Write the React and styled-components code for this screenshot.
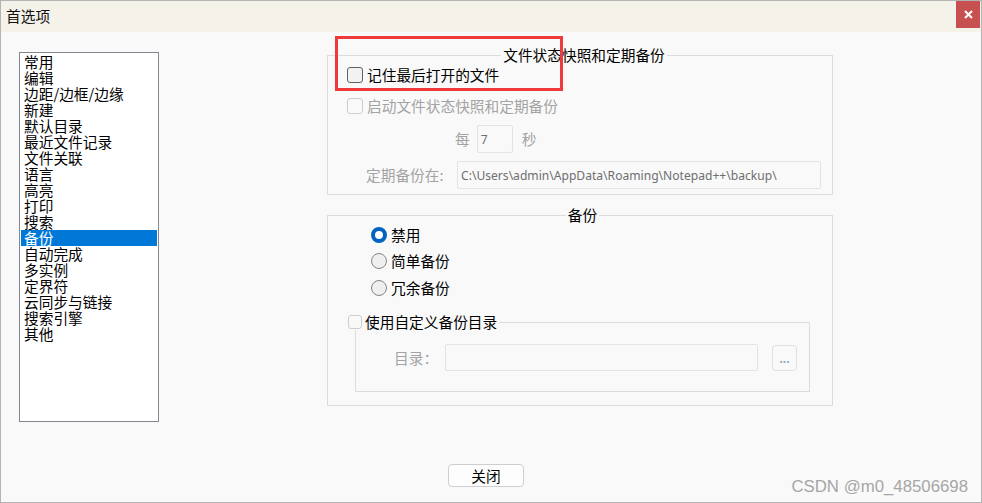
import React from 'react';
import styled, { createGlobalStyle } from 'styled-components';

const CJK = `"Noto Sans CJK SC", "Noto Sans", sans-serif`;

const Global = createGlobalStyle`
  html, body { margin: 0; padding: 0; background: #ffffff; }
  body { font-family: ${CJK}; }
  * { box-sizing: border-box; }
`;

const Window = styled.div`
  position: relative;
  width: 982px;
  height: 503px;
  border: 1px solid #b4b4b4;
  background: #f9f9f9;
  display: flex;
  flex-direction: column;
  overflow: hidden;
`;

const TitleBar = styled.div`
  height: 31px;
  flex: none;
  background: #f5f2ea;
  display: flex;
  align-items: flex-start;
  justify-content: space-between;
  padding-left: 5px;
`;

const TitleText = styled.div`
  font-size: 14.7px;
  line-height: 16px;
  margin-top: 7px;
  color: #111;
`;

const CloseBtn = styled.div`
  width: 24px;
  height: 27px;
  margin-right: 1px;
  background: #c75050;
  display: flex;
  align-items: center;
  justify-content: center;
`;

const Body = styled.div`
  flex: 1;
  display: flex;
  flex-direction: column;
  padding: 15px 0 0 18px;
`;

const MainRow = styled.div`
  display: flex;
  align-items: flex-start;
  height: 375px;
`;

const ListBox = styled.div`
  width: 140px;
  height: 370px;
  margin-top: 5px;
  border: 1px solid #828790;
  background: #ffffff;
  padding: 1px;
`;

const ListItem = styled.div`
  height: 16px;
  line-height: 16px;
  font-size: 14.7px;
  padding-left: 3px;
  white-space: nowrap;
  color: ${(p) => (p.$selected ? '#ffffff' : '#000000')};
  background: ${(p) => (p.$selected ? '#0078d7' : 'transparent')};
`;

const Panel = styled.div`
  margin-left: 168px;
  width: 506px;
  display: flex;
  flex-direction: column;
`;

const Group = styled.fieldset`
  margin: ${(p) => p.$mt || 0}px 0 0 0;
  min-inline-size: 0;
  border: 1px solid #dcdcdc;
  padding: ${(p) => p.$pad};
  display: flex;
  flex-direction: column;
`;

const Legend = styled.legend`
  margin: 0 auto;
  padding: 0 2px;
  font-size: 14.7px;
  line-height: 16px;
  color: #000;
`;

const CheckLegend = styled.legend`
  margin-left: -8px;
  padding: 0 2px 0 0;
  display: flex;
  align-items: center;
  gap: 3px;
  font-size: 14.7px;
  line-height: 16px;
  height: 16px;
  color: #000;
`;

const Box = styled.span`
  flex: none;
  width: ${(p) => p.$size || 16}px;
  height: ${(p) => p.$size || 16}px;
  border-radius: 3px;
  border: 1px solid ${(p) => (p.$disabled ? '#cdcdcd' : '#616161')};
  background: ${(p) => (p.$disabled ? '#f9f9f9' : '#f2f2f2')};
`;

const OptionRow = styled.div`
  display: flex;
  align-items: center;
  gap: 4px;
  height: 16px;
  margin-top: ${(p) => p.$mt || 0}px;
  margin-left: ${(p) => p.$ml || 0}px;
  font-size: 14.7px;
  line-height: 16px;
  white-space: nowrap;
  color: ${(p) => (p.$disabled ? '#a3a3a3' : '#000000')};
`;

const Radio = styled.span`
  flex: none;
  width: 16px;
  height: 16px;
  border-radius: 50%;
  border: ${(p) => (p.$checked ? '4.5px solid #0063c1' : '1px solid #858585')};
  background: ${(p) => (p.$checked ? '#ffffff' : '#efefef')};
`;

const FieldRow = styled.div`
  display: flex;
  align-items: center;
  height: ${(p) => p.$h || 28}px;
  margin-top: ${(p) => p.$mt || 0}px;
  padding-left: ${(p) => p.$pl || 0}px;
`;

const Label = styled.span`
  flex: none;
  width: ${(p) => (p.$w ? `${p.$w}px` : 'auto')};
  margin-right: ${(p) => p.$mr || 0}px;
  font-size: 14.7px;
  line-height: 16px;
  color: #a3a3a3;
  white-space: nowrap;
`;

const TextInput = styled.div`
  flex: ${(p) => (p.$w ? 'none' : '1')};
  width: ${(p) => (p.$w ? `${p.$w}px` : 'auto')};
  height: ${(p) => p.$h || 28}px;
  border: 1px solid #e4e4e4;
  border-radius: 2px;
  background: #f9f9f9;
  display: flex;
  align-items: center;
  padding-left: 3px;
  margin-right: ${(p) => p.$mr || 0}px;
  font-family: "Noto Sans", "Open Sans", sans-serif;
  font-size: 12.1px;
  color: #6e6e6e;
  white-space: nowrap;
  overflow: hidden;
`;

const DotsButton = styled.div`
  flex: none;
  width: 25px;
  height: 26px;
  border: 1px solid #e0e0e0;
  border-radius: 4px;
  background: #f9f9f9;
  display: flex;
  align-items: center;
  justify-content: center;
  font-family: "Liberation Sans", sans-serif;
  font-size: 12px;
  font-weight: bold;
  color: #8fa3bf;
  padding-top: 2px;
`;

const Footer = styled.div`
  margin-top: 42px;
  padding-left: 429px;
  display: flex;
`;

const Button = styled.div`
  width: 76px;
  height: 23px;
  border: 1px solid #cfcfcf;
  border-radius: 4px;
  background: #fdfdfd;
  display: flex;
  align-items: center;
  justify-content: center;
  font-size: 14.7px;
  line-height: 16px;
  color: #000;
`;

const Watermark = styled.div`
  position: absolute;
  right: 13px;
  bottom: 5px;
  font-family: "Liberation Sans", Arial, sans-serif;
  font-size: 16.8px;
  color: #a6a6a6;
`;

const Annotation = styled.div`
  position: absolute;
  left: 334px;
  top: 35px;
  width: 228px;
  height: 55px;
  border: 3px solid #f0393a;
  pointer-events: none;
`;

const items = [
  '常用', '编辑', '边距/边框/边缘', '新建', '默认目录', '最近文件记录', '文件关联',
  '语言', '高亮', '打印', '搜索', '备份', '自动完成', '多实例', '定界符',
  '云同步与链接', '搜索引擎', '其他',
];

export default function App() {
  return (
    <>
      <Global />
      <Window>
        <TitleBar>
          <TitleText>首选项</TitleText>
          <CloseBtn>
            <svg width="9" height="9" viewBox="0 0 9 9">
              <path d="M1 1 L8 8 M8 1 L1 8" stroke="#ffffff" strokeWidth="2" />
            </svg>
          </CloseBtn>
        </TitleBar>
        <Body>
          <MainRow>
            <ListBox>
              {items.map((t) => (
                <ListItem key={t} $selected={t === '备份'}>{t}</ListItem>
              ))}
            </ListBox>
            <Panel>
              <Group $pad="4px 11px 5px 19px">
                <Legend>文件状态快照和定期备份</Legend>
                <OptionRow>
                  <Box />
                  <span>记住最后打开的文件</span>
                </OptionRow>
                <OptionRow $mt={15} $disabled>
                  <Box $disabled />
                  <span>启动文件状态快照和定期备份</span>
                </OptionRow>
                <FieldRow $mt={11} $pl={108}>
                  <Label $mr={7}>每</Label>
                  <TextInput $w={36} $mr={9}>7</TextInput>
                  <Label>秒</Label>
                </FieldRow>
                <FieldRow $mt={8} $pl={19}>
                  <Label $w={91}>定期备份在:</Label>
                  <TextInput>C:\Users\admin\AppData\Roaming\Notepad++\backup\</TextInput>
                </FieldRow>
              </Group>
              <Group $mt={12} $pad="4px 22px 13px 27px">
                <Legend>备份</Legend>
                <OptionRow $ml={16}>
                  <Radio $checked />
                  <span>禁用</span>
                </OptionRow>
                <OptionRow $ml={16} $mt={10}>
                  <Radio />
                  <span>简单备份</span>
                </OptionRow>
                <OptionRow $ml={16} $mt={11}>
                  <Radio />
                  <span>冗余备份</span>
                </OptionRow>
                <Group $mt={18} $pad="14px 12px 20px 0">
                  <CheckLegend>
                    <Box $disabled $size={14} />
                    <span>使用自定义备份目录</span>
                  </CheckLegend>
                  <FieldRow $h={27} $pl={38}>
                    <Label $w={51}>目录：</Label>
                    <TextInput $h={27} $mr={14} />
                    <DotsButton>...</DotsButton>
                  </FieldRow>
                </Group>
              </Group>
            </Panel>
          </MainRow>
          <Footer>
            <Button>关闭</Button>
          </Footer>
        </Body>
        <Watermark>CSDN @m0_48506698</Watermark>
        <Annotation />
      </Window>
    </>
  );
}
